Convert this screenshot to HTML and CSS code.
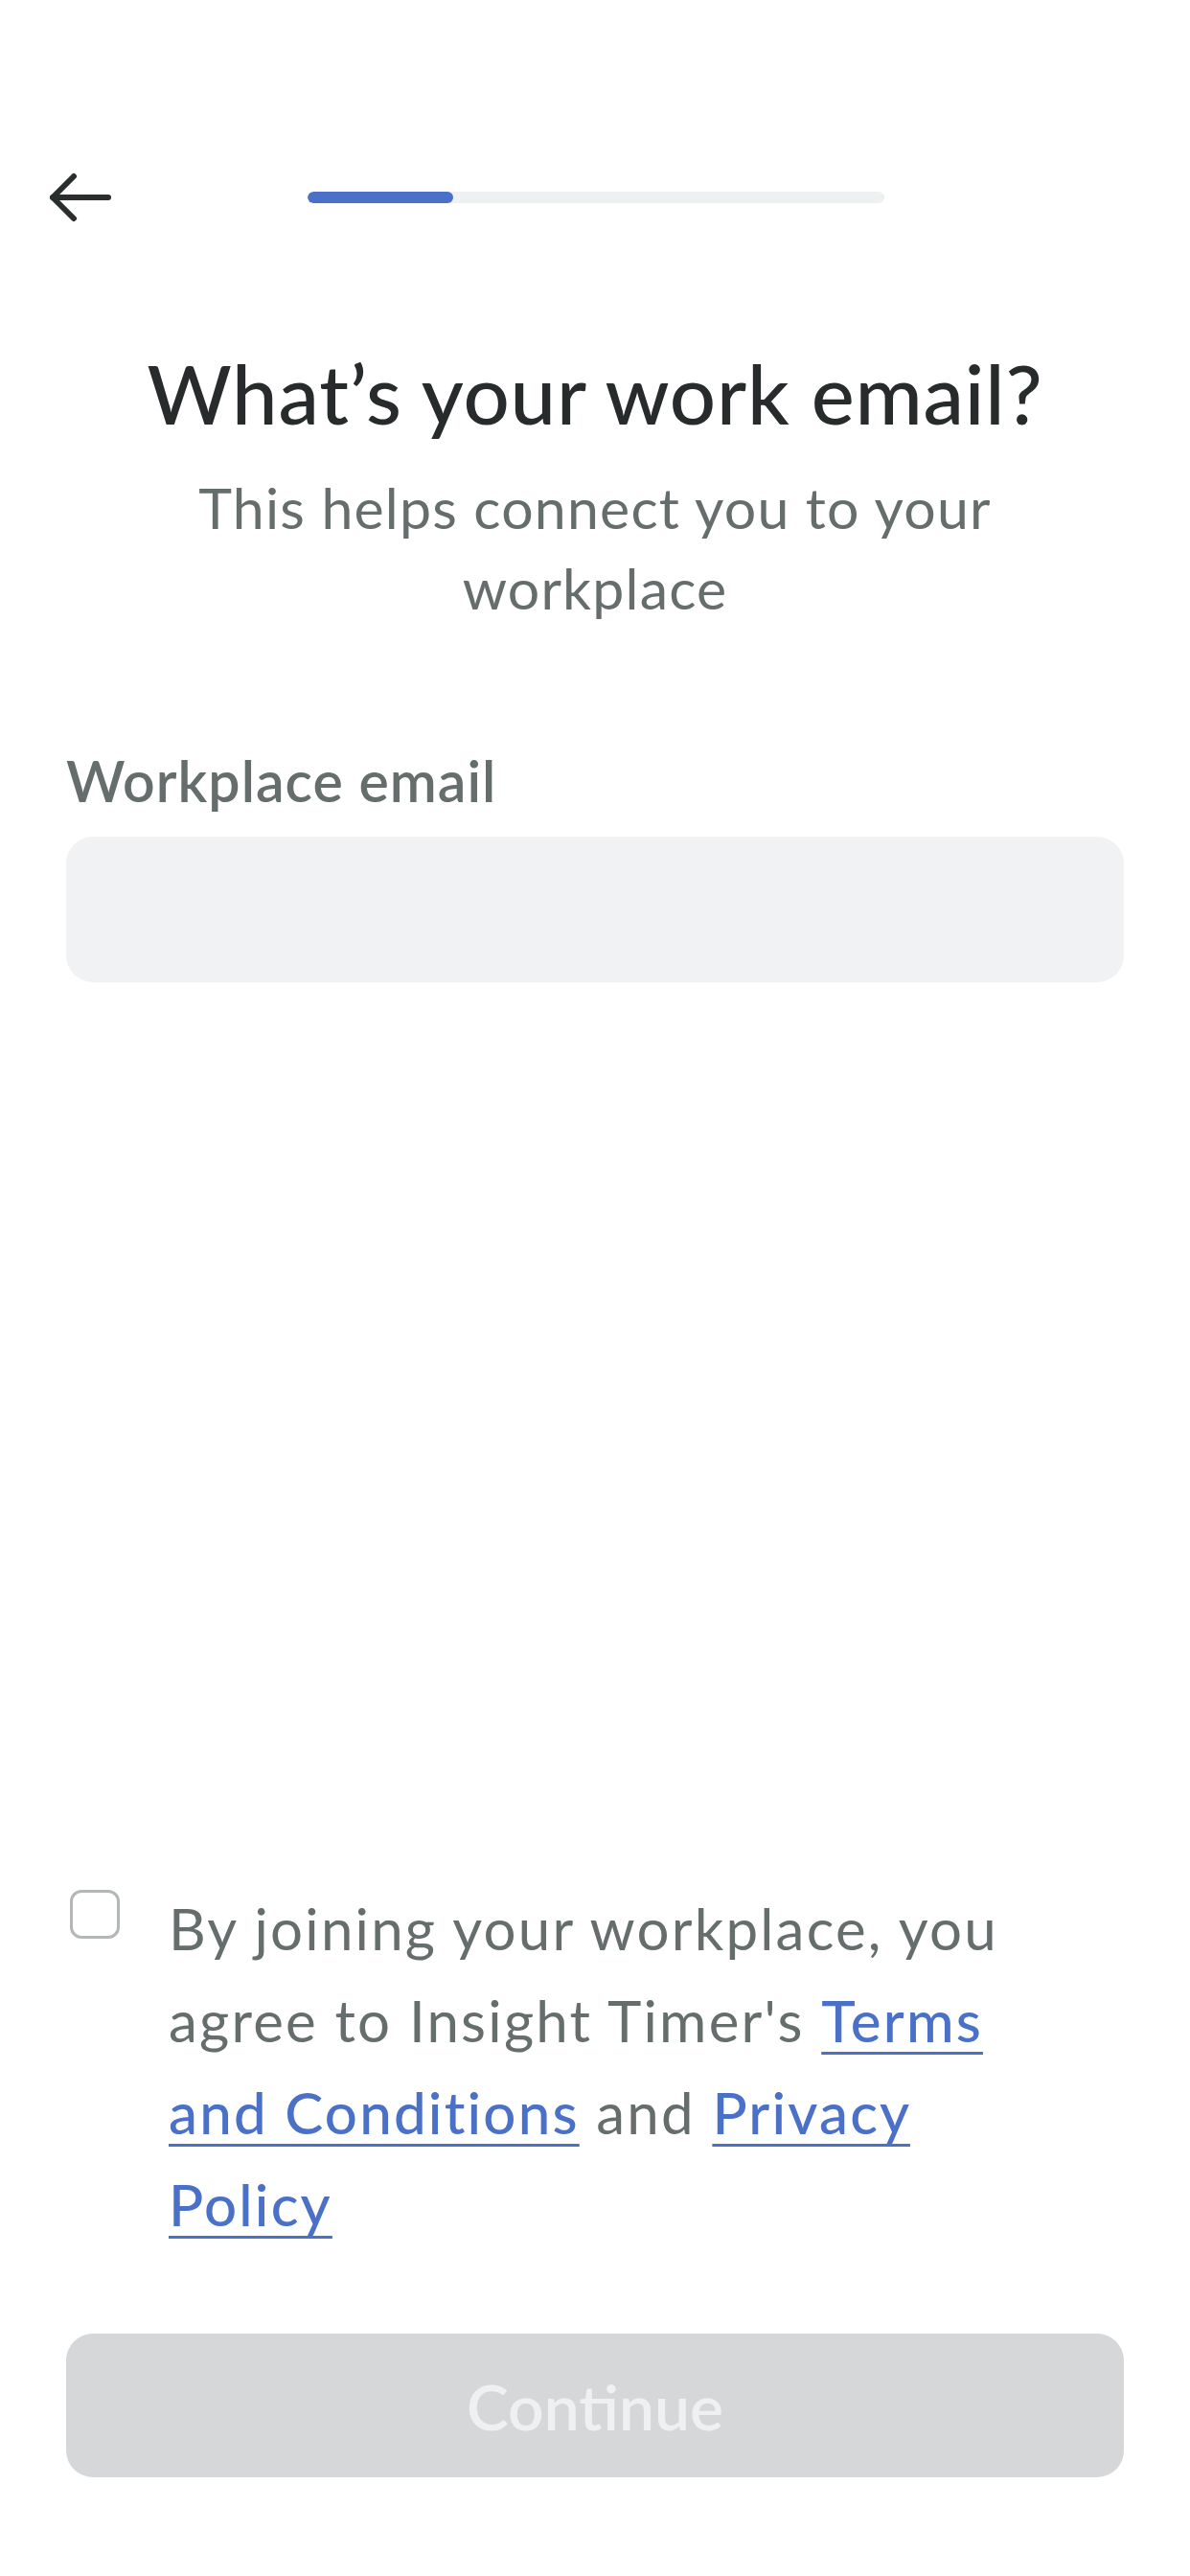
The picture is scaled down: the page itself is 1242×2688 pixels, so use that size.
FILE: index.html
```html
<!DOCTYPE html>
<html lang="en">
<head>
<meta charset="utf-8">
<title>Work email</title>
<link rel="stylesheet" href="styles.css">
</head>
<body>
<div class="screen">
  <header class="topbar">
    <button class="back" aria-label="Back">
      <svg width="72" height="52" viewBox="0 0 72 52" fill="none" stroke="#2a2e2f" stroke-width="6" stroke-linecap="round" stroke-linejoin="round">
        <path d="M31 4 L9 26 L31 48"/>
        <path d="M9 26 H67"/>
      </svg>
    </button>
    <div class="progress"><div class="progress-fill" style="width:152px"></div></div>
  </header>

  <section class="intro">
    <h1 class="title">What’s your work email?</h1>
    <p class="subtitle">This helps connect you to your workplace</p>
  </section>

  <section class="field">
    <label class="field-label" for="email">Workplace email</label>
    <div class="field-input" id="email"></div>
  </section>

  <div class="spacer"></div>

  <div class="agree">
    <span class="checkbox"></span>
    <p class="agree-text"><span>By joining your workplace, you</span> <span>agree to Insight Timer's</span> <a class="link" href="#"><span>Terms</span> <span>and Conditions</span></a> and <a class="link" href="#"><span>Privacy</span> <span>Policy</span></a></p>
  </div>

  <button class="continue" disabled>Continue</button>
</div>
</body>
</html>
```

FILE: styles.css
```css
html, body {
  margin: 0;
  padding: 0;
  background: #ffffff;
}

body {
  font-family: Lato, "Open Sans", sans-serif;
  color: #272b2c;
}

.screen {
  width: 1242px;
  height: 2688px;
  display: flex;
  flex-direction: column;
  box-sizing: border-box;
  padding-bottom: 103px;
}

/* top bar: back arrow and step progress */
.topbar {
  margin-top: 180px;
  height: 52px;
  display: grid;
  grid-template-columns: 1fr 604px 1fr;
  align-items: center;
}

.back {
  justify-self: start;
  margin-left: 46px;
  padding: 0;
  border: 0;
  background: none;
  width: 72px;
  height: 52px;
  display: block;
}

.back svg {
  display: block;
}

.progress {
  height: 12px;
  border-radius: 6px;
  background: #eef1f2;
  overflow: hidden;
  margin-left: 2px;
}

.progress-fill {
  height: 100%;
  border-radius: 6px;
  background: #4a70c8;
}

/* heading */
.intro {
  text-align: center;
  padding: 0 69px;
}

.title {
  margin: 127px 0 0;
  font-size: 85px;
  line-height: 102px;
  font-weight: 500;
  letter-spacing: 0.8px;
  color: #272b2c;
}

.subtitle {
  margin: 27px auto 0;
  max-width: 900px;
  font-size: 59px;
  line-height: 84px;
  font-weight: 400;
  letter-spacing: 1.2px;
  color: #666d6d;
}

/* email field */
.field {
  padding: 0 69px;
  display: flex;
  flex-direction: column;
}

.field-label {
  margin-top: 124px;
  font-size: 59px;
  line-height: 70px;
  font-weight: 600;
  letter-spacing: 1px;
  color: #666d6d;
}

.field-input {
  margin-top: 23px;
  height: 152px;
  border-radius: 28px;
  background: #f1f2f4;
}

.spacer {
  flex: 1;
}

/* terms agreement */
.agree {
  display: flex;
  align-items: flex-start;
  padding: 0 69px 0 73px;
  gap: 51px;
}

.checkbox {
  flex: none;
  width: 52px;
  height: 51px;
  margin-top: 8px;
  box-sizing: border-box;
  border: 3px solid #b4b7b7;
  border-radius: 12px;
}

.agree-text {
  margin: 0;
  max-width: 930px;
  font-size: 60px;
  line-height: 96px;
  letter-spacing: 2.2px;
  color: #666d6d;
}

.link {
  color: #4a70c8;
  font-weight: 500;
  text-decoration: underline;
  text-decoration-thickness: 3px;
  text-underline-offset: 10px;
}

/* primary action */
.continue {
  margin: 87px 69px 0;
  height: 150px;
  border: 0;
  border-radius: 28px;
  background: #d6d7d9;
  color: #eff0f1;
  font-family: Lato, "Open Sans", sans-serif;
  font-size: 66px;
  font-weight: 600;
}
```
